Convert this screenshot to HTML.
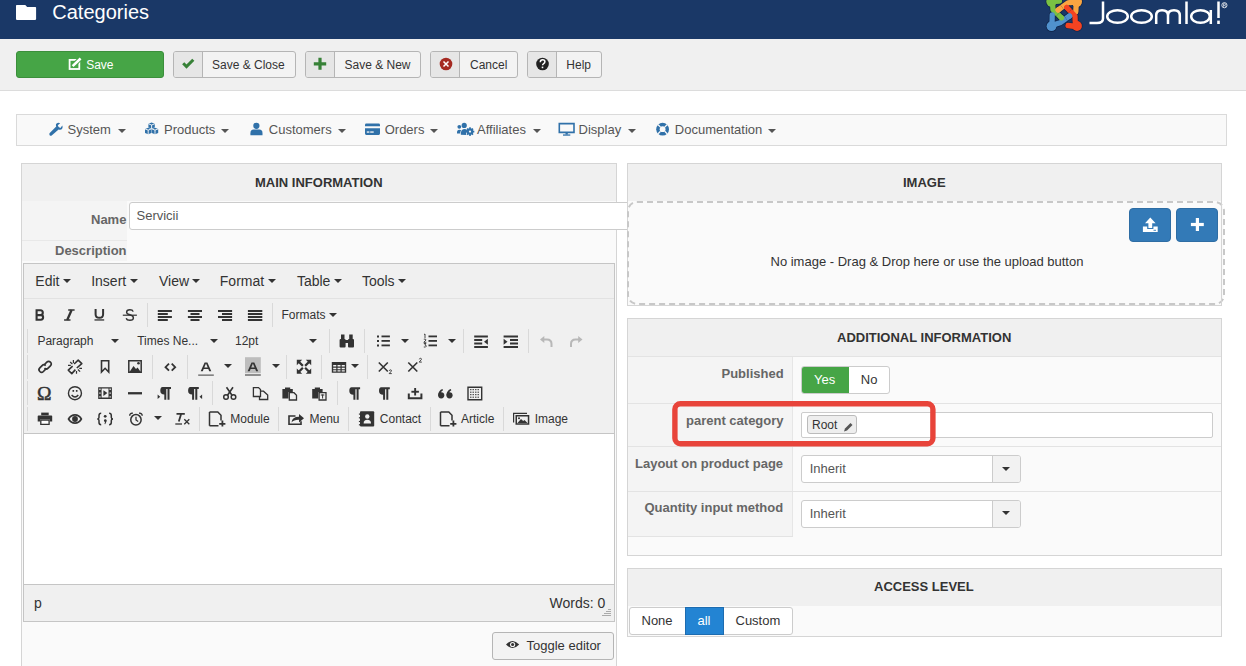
<!DOCTYPE html>
<html><head><meta charset="utf-8">
<style>
*{box-sizing:border-box}
html,body{margin:0;padding:0;width:1246px;height:666px;overflow:hidden;background:#fff;font-family:"Liberation Sans",sans-serif;color:#333}
.a{position:absolute}
.t{position:absolute;white-space:nowrap}
.f12{font-size:12px;line-height:12px}
.f13{font-size:13px;line-height:13px}
.f14{font-size:14px;line-height:14px}
.b{font-weight:bold}
svg{position:absolute;overflow:visible}
#hdr{left:0;top:0;width:1246px;height:39px;background:#1a3867}
#sub{left:0;top:39px;width:1246px;height:52px;background:#f0f0f0;border-bottom:1px solid #dcdcdc}
.btn{position:absolute;top:51px;height:27px;background:#f3f3f3;border:1px solid #b5b5b5;border-radius:3px;color:#333}
.btn .ic{position:absolute;left:0;top:0;bottom:0;width:29px;background:#e6e6e6;border-right:1px solid #b5b5b5;border-radius:2px 0 0 2px}
#menu{left:16px;top:114px;width:1211px;height:32px;background:#f9f9f9;border:1px solid #dadada}
.mt{color:#555}
.caret2{position:absolute;width:0;height:0;border-left:4px solid transparent;border-right:4px solid transparent;border-top:4px solid #333}
.caret{position:absolute;width:0;height:0;border-left:4px solid transparent;border-right:4px solid transparent;border-top:4px solid #555}
.panel{position:absolute;border:1px solid #d5d5d5;background:#fafafa}
.ph{position:absolute;left:0;top:0;right:0;height:38px;background:#f0f0f0}
</style></head><body>
<!-- HEADER -->
<div id="hdr" class="a"></div>
<svg style="left:0;top:0" width="1246" height="39">
  <path d="M16.8,5 h8.5 l1.8,1.9 h8.2 a0.8,0.8 0 0 1 0.8,0.8 v11.4 a0.8,0.8 0 0 1 -0.8,0.8 h-18.5 a0.8,0.8 0 0 1 -0.8,-0.8 v-13.3 a0.8,0.8 0 0 1 0.8,-0.8z" fill="#fff"/>
</svg>
<div class="t" style="left:52.3px;top:2.2px;font-size:20px;line-height:20px;color:#fff">Categories</div>
<!-- joomla logo -->
<svg style="left:0;top:0" width="1246" height="39">
  
  <g stroke-linecap="round" stroke-linejoin="round" fill="none">
   <g stroke="#0f2347" stroke-width="6.6"><path d="M1061.5,17.8 L1053,9.5 L1052.5,3 M1052,1.5 L1059.5,1.2"/><path d="M1058.2,10 L1068,2.8 L1075,2 M1076.3,2 L1075.8,11.8"/><path d="M1066.8,7.5 L1075,16 L1075.2,22 M1076,26.5 L1068,25.5"/><path d="M1069.5,16 L1060,22.8 L1053,25 M1052,26 L1052.2,15"/></g>
   <circle cx="1051.5" cy="1.5" r="5.9" fill="#0f2347"/><circle cx="1076.8" cy="1.8" r="5.9" fill="#0f2347"/><circle cx="1077" cy="26" r="5.6" fill="#0f2347"/><circle cx="1051.5" cy="26.2" r="5.6" fill="#0f2347"/>
   <g stroke-width="5.3"><path d="M1061.5,17.8 L1053,9.5 L1052.5,3 M1052,1.5 L1059.5,1.2" stroke="#7ac143"/><path d="M1058.2,10 L1068,2.8 L1075,2 M1076.3,2 L1075.8,11.8" stroke="#f9a541"/><path d="M1066.8,7.5 L1075,16 L1075.2,22 M1076,26.5 L1068,25.5" stroke="#f44321"/><path d="M1069.5,16 L1060,22.8 L1053,25 M1052,26 L1052.2,15" stroke="#5091cd"/></g>
   <circle cx="1051.5" cy="1.5" r="5.2" fill="#7ac143"/><circle cx="1076.8" cy="1.8" r="5.2" fill="#f9a541"/><circle cx="1077" cy="26" r="4.9" fill="#f44321"/><circle cx="1051.5" cy="26.2" r="4.9" fill="#5091cd"/>
   <g stroke="#0f2347" stroke-width="6.6" stroke-linecap="butt"><path d="M1061.5,17.8 L1058,14.4"/><path d="M1058.2,10 L1062,7.2"/><path d="M1066.8,7.5 L1070,10.8"/><path d="M1069.5,16 L1066,18.5"/></g>
   <g stroke-width="5.3" stroke-linecap="butt"><path d="M1061.5,17.8 L1058,14.4" stroke="#7ac143"/><path d="M1058.2,10 L1062,7.2" stroke="#f9a541"/><path d="M1066.8,7.5 L1070,10.8" stroke="#f44321"/><path d="M1069.5,16 L1066,18.5" stroke="#5091cd"/></g>
   <g stroke-width="5.3"><path d="M1061.5,17.8 L1061.4,17.7" stroke="#7ac143"/><path d="M1058.2,10 L1058.3,9.9" stroke="#f9a541"/><path d="M1066.8,7.5 L1066.9,7.6" stroke="#f44321"/><path d="M1069.5,16 L1069.4,16.1" stroke="#5091cd"/></g>
  </g>
  <g fill="none" stroke="#fff" stroke-width="2.5">
   <path d="M1103,1.5 V18.5 Q1103,23 1097,23 H1089.5"/>
   <ellipse cx="1117.5" cy="16.5" rx="10.3" ry="6.3"/>
   <ellipse cx="1141.5" cy="16.5" rx="10.3" ry="6.3"/>
   <path d="M1156.2,24 V15.5 Q1156.2,10.3 1162,10.3 Q1168,10.3 1168,15.5 V24 M1168,15.5 Q1168,10.3 1174,10.3 Q1179.8,10.3 1179.8,15.5 V24"/>
   <path d="M1186.5,1.5 V24"/>
   <ellipse cx="1200.5" cy="16.5" rx="9.3" ry="6.3"/>
   <path d="M1210.8,10 V24"/>
   <path d="M1218.5,1.5 V18"/>
  </g>
  <rect x="1217.2" y="20.6" width="2.6" height="3.4" fill="#fff"/>
  <circle cx="1224.4" cy="5.2" r="2.6" fill="none" stroke="#fff" stroke-width="0.8"/><path d="M1223.5,6.8 V3.7 H1224.8 Q1225.6,3.7 1225.6,4.5 Q1225.6,5.3 1224.8,5.3 H1223.5 M1224.7,5.3 L1225.6,6.8" fill="none" stroke="#fff" stroke-width="0.6"/>
</svg>
<!-- SUBHEAD TOOLBAR -->
<div id="sub" class="a"></div>
<div class="btn" style="left:16px;width:148px;background:#46a546;border-color:#3b8f3b"></div>
<svg style="left:0;top:0" width="700" height="90">
  <rect x="69.6" y="59.9" width="9.7" height="9.1" fill="none" stroke="#fff" stroke-width="1.8"/>
  <path d="M72.3,66.3 L80.6,58.3" stroke="#46a546" stroke-width="4.6"/>
  <path d="M72.6,66.2 L80.6,58.5" stroke="#fff" stroke-width="2.5"/>
</svg>
<div class="t f12" style="left:86.2px;top:59px;color:#fff">Save</div>

<div class="btn" style="left:173px;width:123px"><div class="ic"></div></div>
<svg style="left:0;top:0" width="700" height="90"><path d="M183.2,63.3 l3.3,3.3 l6.8,-6.8" stroke="#378137" stroke-width="3" fill="none"/></svg>
<div class="t f12" style="left:212px;top:58.5px">Save &amp; Close</div>

<div class="btn" style="left:305px;width:116px"><div class="ic"></div></div>
<svg style="left:0;top:0" width="700" height="90"><path d="M320,57.8 v12 M313.8,63.8 h12.4" stroke="#378137" stroke-width="3.2" fill="none"/></svg>
<div class="t f12" style="left:344.5px;top:58.5px">Save &amp; New</div>

<div class="btn" style="left:430px;width:88px"><div class="ic"></div></div>
<svg style="left:0;top:0" width="700" height="90"><circle cx="446" cy="64" r="6.3" fill="#a52a22"/><path d="M443.5,61.5 l5,5 M448.5,61.5 l-5,5" stroke="#fff" stroke-width="1.5"/></svg>
<div class="t f12" style="left:470px;top:58.5px">Cancel</div>

<div class="btn" style="left:527px;width:75px"><div class="ic"></div></div>
<svg style="left:0;top:0" width="700" height="90"><circle cx="542.5" cy="64" r="6.3" fill="#222"/><path d="M540.3,62.3 q0,-2.5 2.3,-2.5 q2.3,0 2.3,2 q0,1.3 -1.5,2 q-0.8,0.5 -0.8,1.5" stroke="#fff" stroke-width="1.5" fill="none"/><rect x="541.7" y="66.6" width="1.6" height="1.6" fill="#fff"/></svg>
<div class="t f12" style="left:566.3px;top:58.5px">Help</div>

<!-- MENU BAR -->
<div id="menu" class="a"></div>
<svg style="left:0;top:0" width="800" height="150" fill="#3071a9">
  <!-- wrench -->
  <path d="M49.5,133.3 L56.2,126.6 Q55.2,123.5 57.5,122.9 Q59.2,122.6 60.2,123.3 L57.8,125.3 L58.6,127.1 L60.4,127.9 L62.3,125.5 Q62.9,127 62.4,128.2 Q61.3,130.4 58.6,129.6 L51.7,135.4 Q50.7,136.2 49.8,135.4 Q49,134.3 49.5,133.3Z"/>
  <!-- cubes -->
  <path d="M148.4,123.8 L151.6,122.6 L154.8,123.8 V127.4 L151.6,128.6 L148.4,127.4Z M145,128.9 L148.2,127.7 L151.4,128.9 V133 L148.2,134.3 L145,133Z M151.8,128.9 L155,127.7 L158.2,128.9 V133 L155,134.3 L151.8,133Z"/>
  <path d="M148.4,123.8 L151.6,125 L154.8,123.8 M145,128.9 L148.2,130.1 L151.4,128.9 M151.8,128.9 L155,130.1 L158.2,128.9 M151.6,125 V128.6 M148.2,130.1 V134.3 M155,130.1 V134.3" stroke="#f9f9f9" stroke-width="0.9" fill="none"/>
  <!-- user -->
  <circle cx="256.4" cy="125.8" r="3.1"/>
  <path d="M250.4,135.3 V133.2 Q250.4,129.6 253.6,129.6 H259.3 Q262.5,129.6 262.5,133.2 V135.3Z"/>
  <!-- credit card -->
  <path d="M365,124.9 Q365,123.6 366.3,123.6 H378.7 Q380,123.6 380,124.9 V126.2 H365Z M365,128.3 H380 V133.6 Q380,134.9 378.7,134.9 H366.3 Q365,134.9 365,133.6Z"/>
  <rect x="366.8" y="131.4" width="2.6" height="1.3" fill="#f9f9f9"/><rect x="370.2" y="131.4" width="3.5" height="1.3" fill="#f9f9f9"/>
  <!-- users cog -->
  <circle cx="459.3" cy="126.8" r="1.9"/><circle cx="464.2" cy="125.4" r="2.6"/>
  <path d="M457,132.6 Q457,129.8 459.3,129.8 Q460.6,129.8 461.2,130.6 Q460,131.8 460.2,133.6 H457Z M460.8,134.8 Q460.6,129.2 464.2,129 Q466.4,129 467.2,130.4 Q465.4,133 466.2,135Z"/>
  <circle cx="470" cy="131.6" r="3.3"/>
  <path d="M470,127.3 V135.9 M465.7,131.6 H474.3 M467,128.6 L473,134.6 M473,128.6 L467,134.6" stroke="#3071a9" stroke-width="1.6"/>
  <circle cx="470" cy="131.6" r="1.1" fill="#f9f9f9"/>
  <!-- desktop -->
  <path d="M559.3,123.6 H574 V132.4 H559.3Z" fill="none" stroke="#3071a9" stroke-width="1.6"/>
  <rect x="565.5" y="133" width="2.3" height="1.6"/><rect x="563" y="134.4" width="7.3" height="1.3"/>
  <!-- life ring -->
  <circle cx="662.6" cy="129.2" r="6.4"/>
  <circle cx="662.6" cy="129.2" r="2.9" fill="#f9f9f9"/>
  <path d="M658.1,124.7 L660.5,127.1 M667.1,124.7 L664.7,127.1 M658.1,133.7 L660.5,131.3 M667.1,133.7 L664.7,131.3" stroke="#f9f9f9" stroke-width="1.3"/>
</svg>
<div class="t f13 mt" style="left:67.5px;top:123px">System</div><div class="caret" style="left:117.8px;top:129px"></div>
<div class="t f13 mt" style="left:164px;top:123px">Products</div><div class="caret" style="left:221.4px;top:129px"></div>
<div class="t f13 mt" style="left:268.8px;top:123px">Customers</div><div class="caret" style="left:338px;top:129px"></div>
<div class="t f13 mt" style="left:384.7px;top:123px">Orders</div><div class="caret" style="left:430.2px;top:129px"></div>
<div class="t f13 mt" style="left:477px;top:123px">Affiliates</div><div class="caret" style="left:532.8px;top:129px"></div>
<div class="t f13 mt" style="left:578.6px;top:123px">Display</div><div class="caret" style="left:627.5px;top:129px"></div>
<div class="t f13 mt" style="left:674.8px;top:123px">Documentation</div><div class="caret" style="left:768.4px;top:129px"></div>

<!-- MAIN PANEL -->
<div class="panel" style="left:21px;top:163px;width:596px;height:520px"></div>
<div class="a" style="left:22px;top:164px;width:594px;height:37px;background:#f0f0f0"></div>
<div class="t f13 b" style="left:255px;top:176px;color:#333">MAIN INFORMATION</div>
<div class="a" style="left:22px;top:201px;width:105px;height:60px;background:#f4f4f4"></div>
<div class="a" style="left:22px;top:240px;width:105px;height:1px;background:#e8e8e8"></div>
<div class="t f13 b" style="left:91px;top:213px;color:#666">Name</div>
<div class="t f13 b" style="left:55px;top:243.7px;color:#666">Description</div>
<div class="a" style="left:129px;top:202px;width:520px;height:28px;background:#fff;border:1px solid #ccc;border-radius:3px"></div>
<div class="t f13" style="left:136.5px;top:209px;color:#555">Servicii</div>
<!-- editor -->
<div class="a" style="left:23px;top:263px;width:592px;height:359px;border:1px solid #c5c5c5;background:#fff"></div>
<div class="a" style="left:24px;top:264px;width:590px;height:35px;background:#f0f0f0;border-bottom:1px solid #e2e2e2"></div>
<div class="a" style="left:24px;top:299px;width:590px;height:135px;background:#f0f0f0;border-bottom:1px solid #c5c5c5"></div>
<div class="a" style="left:24px;top:584px;width:590px;height:37px;background:#f0f0f0;border-top:1px solid #c5c5c5"></div>
<!-- editor menubar texts -->
<div class="t f14" style="left:35.3px;top:274px">Edit</div><div class="caret2" style="left:63px;top:279.3px"></div>
<div class="t f14" style="left:91.2px;top:274px">Insert</div><div class="caret2" style="left:130px;top:279.3px"></div>
<div class="t f14" style="left:159px;top:274px">View</div><div class="caret2" style="left:191.8px;top:279.3px"></div>
<div class="t f14" style="left:219.8px;top:274px">Format</div><div class="caret2" style="left:268.2px;top:279.3px"></div>
<div class="t f14" style="left:296.9px;top:274px">Table</div><div class="caret2" style="left:334px;top:279.3px"></div>
<div class="t f14" style="left:361.9px;top:274px">Tools</div><div class="caret2" style="left:398.3px;top:279.3px"></div>
<!-- separators -->
<svg style="left:0;top:0" width="620" height="440">
 <g fill="#d9d9d9">
  <rect x="147" y="303" width="1" height="24"/><rect x="272" y="303" width="1" height="24"/>
  <rect x="27" y="329" width="1" height="24"/><rect x="329" y="329" width="1" height="24"/><rect x="364" y="329" width="1" height="24"/><rect x="463" y="329" width="1" height="24"/><rect x="528" y="329" width="1" height="24"/>
  <rect x="27" y="355" width="1" height="24"/><rect x="152" y="355" width="1" height="24"/><rect x="187" y="355" width="1" height="24"/><rect x="286" y="355" width="1" height="24"/><rect x="321" y="355" width="1" height="24"/><rect x="367" y="355" width="1" height="24"/>
  <rect x="27" y="381" width="1" height="24"/><rect x="212" y="381" width="1" height="24"/><rect x="337" y="381" width="1" height="24"/>
  <rect x="27" y="407" width="1" height="24"/><rect x="199" y="407" width="1" height="24"/><rect x="278" y="407" width="1" height="24"/><rect x="348" y="407" width="1" height="24"/><rect x="430" y="407" width="1" height="24"/><rect x="503" y="407" width="1" height="24"/>
 </g>
</svg>
<!-- row texts -->
<div class="t f12" style="left:281.5px;top:308.8px">Formats</div><div class="caret2" style="left:329.2px;top:313px"></div>
<div class="t f12" style="left:37.4px;top:335px">Paragraph</div><div class="caret2" style="left:111px;top:339px"></div>
<div class="t f12" style="left:137.2px;top:335px">Times Ne...</div><div class="caret2" style="left:209.7px;top:339px"></div>
<div class="t f12" style="left:235px;top:335px">12pt</div><div class="caret2" style="left:308.8px;top:339px"></div>
<div class="caret2" style="left:400.8px;top:339px"></div><div class="caret2" style="left:447.7px;top:339px"></div>
<div class="caret2" style="left:224.2px;top:363.5px"></div><div class="caret2" style="left:271.6px;top:363.5px"></div><div class="caret2" style="left:351px;top:363.5px"></div>
<div class="caret2" style="left:154.2px;top:416px"></div>
<div class="t f12" style="left:230.3px;top:412.9px">Module</div>
<div class="t f12" style="left:309.5px;top:412.9px">Menu</div>
<div class="t f12" style="left:379.8px;top:412.9px">Contact</div>
<div class="t f12" style="left:461px;top:412.9px">Article</div>
<div class="t f12" style="left:534.7px;top:412.9px">Image</div>
<!-- editor icons -->
<svg style="left:0;top:0" width="620" height="440">
<g fill="none" stroke="#333">
 <!-- B -->
 <path d="M36.6,309.2 V320.8 M36.6,310.25 H40.4 Q42.8,310.25 42.8,312.7 Q42.8,315.1 40.4,315.1 H36.6 M40.4,315.1 H40.9 Q43.1,315.1 43.1,317.35 Q43.1,319.75 40.9,319.75 H36.6" stroke-width="2.1"/>
 <!-- I -->
 <path d="M68.2,310 H74.6 M64.1,320 H70.5" stroke-width="1.6"/>
 <path d="M71.6,310 L67.2,320" stroke-width="2.3"/>
 <!-- U -->
 <path d="M95.6,309 V314.2 Q95.6,317.8 99.35,317.8 Q103.1,317.8 103.1,314.2 V309" stroke-width="2"/>
 <!-- strike -->
 <path d="M122.8,315.2 H136.9" stroke-width="1.2"/>
 <path d="M133.2,311.6 Q132.6,309.8 129.9,309.8 Q126.6,309.8 126.6,312.2 Q126.6,313.9 129.9,314.8 Q133.4,315.8 133.4,318 Q133.4,320.3 129.9,320.3 Q126.8,320.3 126.2,318.3" stroke-width="1.4"/>
</g>
<g fill="#333">
 <rect x="94.5" y="319.3" width="9.7" height="1.3"/>
 <!-- align -->
 <rect x="157.8" y="310" width="14.1" height="2"/><rect x="157.8" y="313" width="10" height="2"/><rect x="157.8" y="316" width="14.1" height="2"/><rect x="157.8" y="319" width="10" height="2"/>
 <rect x="187.9" y="310" width="14.1" height="2"/><rect x="190.5" y="313" width="9" height="2"/><rect x="187.9" y="316" width="14.1" height="2"/><rect x="190.5" y="319" width="9" height="2"/>
 <rect x="218" y="310" width="14.1" height="2"/><rect x="222" y="313" width="10.1" height="2"/><rect x="218" y="316" width="14.1" height="2"/><rect x="222" y="319" width="10.1" height="2"/>
 <rect x="247.9" y="310" width="14.4" height="2"/><rect x="247.9" y="313" width="14.4" height="2"/><rect x="247.9" y="316" width="14.4" height="2"/><rect x="247.9" y="319" width="14.4" height="2"/>
 <!-- binoculars -->
 <rect x="339.6" y="339" width="6" height="8.5" rx="1"/><rect x="348" y="339" width="6" height="8.5" rx="1"/>
 <rect x="341" y="334.5" width="3.5" height="5"/><rect x="349.2" y="334.5" width="3.5" height="5"/><rect x="345" y="340" width="3.5" height="3"/>
 <!-- bullist -->
 <rect x="377" y="335.5" width="2" height="2"/><rect x="377" y="340" width="2" height="2"/><rect x="377" y="344.5" width="2" height="2"/>
 <rect x="381.5" y="335.5" width="8.4" height="1.8"/><rect x="381.5" y="340" width="8.4" height="1.8"/><rect x="381.5" y="344.5" width="8.4" height="1.8"/>
 <!-- numlist -->
 <rect x="428.5" y="335.5" width="8.5" height="1.8"/><rect x="428.5" y="340" width="8.5" height="1.8"/><rect x="428.5" y="344.5" width="8.5" height="1.8"/>
</g>
<g fill="none" stroke="#333" stroke-width="0.9">
 <path d="M424,334.5 L425,334 V338 M423.8,339.2 Q426,338.5 426,340 L423.8,342.3 H426.3 M423.8,343.5 H426 L424.8,345 Q426.4,345 426.3,346.2 Q426,347.5 423.8,347"/>
</g>
<g fill="#333">
 <!-- outdent / indent -->
 <rect x="474.2" y="335.5" width="13.7" height="2"/><rect x="474.2" y="339" width="8" height="2"/><rect x="474.2" y="342.5" width="8" height="2"/><rect x="474.2" y="346" width="13.7" height="2"/>
 <path d="M487.9,338.8 V344.7 L484,341.75Z"/>
 <rect x="503.6" y="335.5" width="14.4" height="2"/><rect x="510" y="339" width="8" height="2"/><rect x="510" y="342.5" width="8" height="2"/><rect x="503.6" y="346" width="14.4" height="2"/>
 <path d="M503.6,338.8 V344.7 L507.5,341.75Z"/>
</g>
<g fill="none" stroke="#b8b8b8" stroke-width="2">
 <path d="M543,339.5 H547 Q551.5,339.5 551.5,344 V347"/><path d="M579.5,339.5 H575.5 Q571,339.5 571,344 V347"/>
</g>
<g fill="#b8b8b8"><path d="M540,339.5 L544.3,336 V343Z"/><path d="M582.5,339.5 L578.2,336 V343Z"/></g>
<!-- row3 -->
<g fill="none" stroke="#333" stroke-width="1.7">
 <path d="M44.5,364.5 L46.8,362.2 Q48.6,360.4 50.4,362.2 Q52.2,364 50.4,365.8 L48.1,368.1 Q46.3,369.9 44.5,368.1"/>
 <path d="M45.7,369.2 L43.4,371.5 Q41.6,373.3 39.8,371.5 Q38,369.7 39.8,367.9 L42.1,365.6 Q43.9,363.8 45.7,365.6"/>
 <path d="M74.1,364 L78.2,360.1 L81.8,363.6 L76.8,368" stroke-width="1.6" stroke-linejoin="round"/>
 <path d="M72.6,366.2 L68.3,370.2 L71.8,373.6 L75.4,369.6" stroke-width="1.6" stroke-linejoin="round"/>
 <path d="M73.4,360 V363 M70.2,362 L72.4,364.2 M68,365.3 H70.8 M79.3,368.4 H82 M77.9,369.5 L80.1,371.7 M76.5,371 V373.8" stroke-width="1.2"/>
 <path d="M101.5,360.8 H108.7 V372 L105.1,368.3 L101.5,372Z" stroke-width="1.6"/>
 <path d="M128.8,360.8 H141.2 V372.2 H128.8Z" stroke-width="1.5"/>
 <path d="M169,364 L165.5,367.5 L169,371 M171.7,364 L175.2,367.5 L171.7,371" stroke-width="1.8" transform="translate(0,-0.3)"/>
</g>
<g fill="#333">
 <path d="M129.5,372 L133.5,366 L136,369 L137.6,367.5 L140.7,372Z"/><circle cx="138.5" cy="363.3" r="1.3"/>
 <!-- forecolor -->
 <path d="M204.6,362.4 H207.4 L211.3,371.3 H209.2 L208.3,369.1 H203.7 L202.8,371.3 H200.7Z M204.3,367.5 H207.7 L206,363.4Z" fill-rule="evenodd"/>
 <rect x="198.2" y="374.4" width="15.6" height="1.5" fill="#777"/>
 <!-- backcolor -->
 <rect x="245" y="357.2" width="15.8" height="16" fill="#bdbdbd"/>
 <path d="M251.5,362.4 H254.3 L258.2,371.3 H256.1 L255.2,369.1 H250.6 L249.7,371.3 H247.6Z M251.2,367.5 H254.6 L252.9,363.4Z" fill-rule="evenodd"/>
 <rect x="245" y="374.2" width="15.8" height="1.6" fill="#777"/>
 <!-- fullscreen -->
 <path d="M296.8,359.8 H302.2 L296.8,365.2Z M311.2,359.8 H305.8 L311.2,365.2Z M296.8,373.8 H302.2 L296.8,368.4Z M311.2,373.8 H305.8 L311.2,368.4Z"/>
 <path d="M298.5,361.5 L302.9,365.9 M309.5,361.5 L305.1,365.9 M298.5,372.1 L302.9,367.7 M309.5,372.1 L305.1,367.7" stroke="#333" stroke-width="2.2"/>
 <!-- table -->
 <path d="M331.8,362 H346.2 V372.7 H331.8Z M333.2,365 V366.6 H336.3 V365Z M337.5,365 V366.6 H340.5 V365Z M341.7,365 V366.6 H344.8 V365Z M333.2,367.7 V369.3 H336.3 V367.7Z M337.5,367.7 V369.3 H340.5 V367.7Z M341.7,367.7 V369.3 H344.8 V367.7Z M333.2,370.2 V371.5 H336.3 V370.2Z M337.5,370.2 V371.5 H340.5 V370.2Z M341.7,370.2 V371.5 H344.8 V370.2Z" fill-rule="evenodd"/>
</g>
<g fill="none" stroke="#333">
 <path d="M378.8,362.5 L387.8,371.5 M387.8,362.5 L378.8,371.5" stroke-width="1.6"/>
 <path d="M408.3,362.5 L417.3,371.5 M417.3,362.5 L408.3,371.5" stroke-width="1.6"/>
 <path d="M389.3,370.8 Q389.5,369.8 390.5,369.8 Q391.6,369.8 391.4,371 L389.2,373.6 H391.8" stroke-width="0.9"/>
 <path d="M419.3,359.3 Q419.5,358.3 420.5,358.3 Q421.6,358.3 421.4,359.5 L419.2,362.1 H421.8" stroke-width="0.9"/>
</g>
<!-- row4 -->
<text x="37.1" y="399.7" font-family="Liberation Serif" font-size="19.5" fill="#333" stroke="#333" stroke-width="0.5">Ω</text>
<g fill="none" stroke="#333">
 <circle cx="74.95" cy="393.2" r="6.5" stroke-width="1.4"/>
 <path d="M71.6,395 Q75,399 78.3,395" stroke-width="1.4"/>
 
 
 <circle cx="161" cy="397" r="0" />
</g>
<g fill="#333">
 <rect x="72.5" y="390" width="1.6" height="1.8"/><rect x="75.9" y="390" width="1.6" height="1.8"/>
 <path d="M98.2,387.3 H111.9 V398.9 H98.2Z M101.6,388.6 V397.6 H108.5 V388.6Z M99.3,388.6 V390 H100.6 V388.6Z M99.3,392.4 V393.8 H100.6 V392.4Z M99.3,396.2 V397.6 H100.6 V396.2Z M109.5,388.6 V390 H110.8 V388.6Z M109.5,392.4 V393.8 H110.8 V392.4Z M109.5,396.2 V397.6 H110.8 V396.2Z" fill-rule="evenodd"/>
 <path d="M103.4,390.2 L107.4,393.1 L103.4,396Z"/>
 <rect x="128" y="392.1" width="14" height="2.3"/>
 <!-- ltr pilcrow -->
 <path d="M162.5,387 H171 V389 H169.5 V399.8 H167.5 V389 H166.3 V399.8 H164.3 V394.6 Q160.3,394.6 160.3,390.8 Q160.3,387 162.5,387Z"/>
 <path d="M157.6,394.5 L160.2,396.8 L157.6,399.1Z"/>
 <path d="M190.3,387 H198.8 V389 H197.3 V399.8 H195.3 V389 H194.1 V399.8 H192.1 V394.6 Q188.1,394.6 188.1,390.8 Q188.1,387 190.3,387Z"/>
 <path d="M202.1,394.5 L199.5,396.8 L202.1,399.1Z"/>
 <!-- pilcrows -->
 <path d="M351.5,387.3 H360.1 V389.3 H358.6 V399.8 H356.6 V389.3 H355.4 V399.8 H353.4 V394.7 Q349.3,394.7 349.3,391 Q349.3,387.3 351.5,387.3Z"/>
 <path d="M381.2,387.3 H389.8 V389.3 H388.3 V399.8 H386.3 V389.3 H385.1 V399.8 H383.1 V394.7 Q379,394.7 379,391 Q379,387.3 381.2,387.3Z"/>
 <!-- upload -->
 <path d="M407.8,393.5 H409.8 V397.3 H420.4 V393.5 H422.4 V399.3 H407.8Z"/>
 <rect x="414.2" y="388" width="1.9" height="7.5"/><rect x="411.4" y="390.8" width="7.5" height="1.9"/>
 <!-- quote -->
 <circle cx="441.2" cy="395.3" r="3.1"/><circle cx="449.5" cy="395.3" r="3.1"/>
 <path d="M438.2,395 Q438.5,390.3 442.5,389 L443,390.3 Q440.6,391.5 440.8,394Z"/>
 <path d="M446.5,395 Q446.8,390.3 450.8,389 L451.3,390.3 Q448.9,391.5 449.1,394Z"/>
</g>
<g fill="none" stroke="#333">
 <!-- scissors -->
 <circle cx="226" cy="397" r="2.3" stroke-width="1.5"/><circle cx="233.5" cy="397" r="2.3" stroke-width="1.5"/>
 <path d="M227.5,395.2 L233,387.2 M232,395.2 L226.5,387.2" stroke-width="1.6"/>
 <!-- copy -->
 <path d="M253.4,387.6 H258.5 L260.5,389.6 V396.5 H253.4Z" stroke-width="1.3"/>
 <path d="M260.5,391.2 H263.5 L267.7,395 V399.5 H259.5 V396.5" stroke-width="1.3"/>
 <!-- template -->
 <path d="M468,387.2 H481.7 V399.8 H468Z" stroke-width="1.4"/>
 <path d="M470,389.7 H479.8 M470,392.2 H479.8 M470,394.7 H479.8 M470,397.2 H479.8" stroke-width="1" stroke-dasharray="1.5 1"/>
</g>
<g fill="#333">
 <!-- paste -->
 <path d="M282.4,389 H285 V387.5 H290.2 V389 H292.8 V392 H288.5 V398.5 H282.4Z"/>
 <path d="M289.3,392.7 H294 L296.5,395.2 V400 H289.3Z" fill="none" stroke="#333" stroke-width="1.3"/>
 <path d="M312.2,389 H314.8 V387.5 H320 V389 H322.6 V392 H318.3 V398.5 H312.2Z"/>
 <path d="M319.1,392.7 H326 V400 H319.1Z" fill="none" stroke="#333" stroke-width="1.3"/>
 <rect x="320.8" y="394.5" width="3.5" height="1"/><rect x="322.1" y="394.5" width="1" height="4"/>
</g>
<!-- row5 -->
<g fill="#333">
 <!-- print -->
 <path d="M41.2,412.6 H48.7 V415.3 H41.2Z"/>
 <path d="M37.7,416.3 Q37.7,415.6 38.5,415.6 H51.4 Q52.2,415.6 52.2,416.3 V421.6 H49.8 V419.6 H40.1 V421.6 H37.7Z"/>
 <path d="M40.8,420.2 H49.1 V424.3 H40.8Z" fill="#fff" stroke="#333" stroke-width="1.3"/>
 <!-- eye -->
 <path d="M67.5,419 C71,412.3 79,412.3 82.4,419 C79,425.7 71,425.7 67.5,419Z"/>
 <path d="M69.6,419 C72.5,414.6 77.5,414.6 80.3,419 C77.5,423.4 72.5,423.4 69.6,419Z" fill="#f0f0f0"/>
 <circle cx="75" cy="419" r="2.9"/>
</g>
<path d="M101.2,413.3 Q99,413.3 99,415.5 V417.6 Q99,419 97.3,419 Q99,419 99,420.4 V422.6 Q99,424.8 101.2,424.8 M109.1,413.3 Q111.3,413.3 111.3,415.5 V417.6 Q111.3,419 113,419 Q111.3,419 111.3,420.4 V422.6 Q111.3,424.8 109.1,424.8" fill="none" stroke="#333" stroke-width="1.5"/>
<circle cx="105.2" cy="416.3" r="1.4" fill="#333"/><path d="M103.9,420.8 A1.4,1.4 0 1 1 106.5,421.4 L105.2,424.2 L104.5,424 L105,421.9 A1.4,1.4 0 0 1 103.9,420.8Z" fill="#333"/>
<g fill="none" stroke="#333">
 <circle cx="135.95" cy="419.8" r="5.2" stroke-width="1.5"/>
 <path d="M136,416.8 V420 L138.2,421.5" stroke-width="1.3"/>
 <path d="M129.7,415.8 Q129.8,412.8 132.8,413.3 M142.2,415.8 Q142.1,412.8 139.1,413.3" stroke-width="1.4"/>
 <!-- Tx -->
 <path d="M176.5,413.8 H184.8 M181.2,413.8 L178.8,421.5" stroke-width="1.8"/>
 <path d="M175.3,424 H182" stroke-width="1.3"/>
 <path d="M184.3,419.3 L189.3,424.3 M189.3,419.3 L184.3,424.3" stroke-width="1.3"/>
 <!-- module / article doc -->
 <path d="M209.5,412 H217.8 L221,415.2 V420.5 M218.5,425.8 H209.5Z" stroke-width="1.5"/>
 <path d="M209.5,412 V425.8" stroke-width="1.5"/>
 <path d="M440.5,412 H448.8 L452,415.2 V420.5 M449.5,425.8 H440.5Z" stroke-width="1.5"/>
 <path d="M440.5,412 V425.8" stroke-width="1.5"/>
 <!-- menu share -->
 <path d="M295.5,416 H289 V424.2 H301 V421.2" stroke-width="1.6"/>
</g>
<g fill="#333">
 <path d="M221.5,420.5 H223.3 V423 H225.4 V424.8 H223.3 V426.5 H221.5 V424.8 H219.2 V423 H221.5Z"/>
 <path d="M452.5,420.5 H454.3 V423 H456.4 V424.8 H454.3 V426.5 H452.5 V424.8 H450.2 V423 H452.5Z"/>
 <path d="M291.5,422.5 Q292,416.8 299,416.8 V414 L304,418.2 L299,422.5 V419.8 Q294,419.6 291.5,422.5Z"/>
 <!-- contact -->
 <rect x="360" y="411.2" width="14.2" height="15.3" rx="1"/>
 <circle cx="367.3" cy="416.5" r="2.2" fill="#f0f0f0"/>
 <path d="M363.6,423.5 Q363.6,419.8 367.3,419.8 Q371,419.8 371,423.5Z" fill="#f0f0f0"/>
 <rect x="358.9" y="413.5" width="2" height="1.2"/><rect x="358.9" y="417.2" width="2" height="1.2"/><rect x="358.9" y="420.9" width="2" height="1.2"/><rect x="358.9" y="424.2" width="2" height="1.2"/>
 <!-- image -->
 <path d="M515.5,415 H529.3 V424.8 H515.5Z M517,416.5 V423.3 H527.8 V416.5Z" fill-rule="evenodd"/>
 <path d="M513,412.8 H527 V414 H514.2 V422.5 H513Z"/>
 <path d="M517.5,423 L521,419 L523.2,421 L524.5,420 L527.5,423Z"/><circle cx="519" cy="418.2" r="1"/>
</g>
</svg>
<!-- editor statusbar -->
<div class="t f14" style="left:34px;top:595.5px">p</div>
<div class="t f14" style="left:549.5px;top:596.2px">Words: 0</div>
<svg style="left:0;top:0" width="620" height="666"><g fill="#aaa">
 <rect x="608" y="609" width="3" height="1"/><rect x="606" y="611" width="5" height="1"/><rect x="604" y="613" width="7" height="1"/><rect x="602" y="615" width="9" height="1"/>
</g></svg>
<!-- toggle editor -->
<div class="a" style="left:492px;top:632px;width:122px;height:28px;background:#f3f3f3;border:1px solid #b5b5b5;border-radius:3px"></div>
<svg style="left:0;top:0" width="620" height="666">
 <path d="M506,644.5 Q512.6,637.5 519.2,644.5 Q512.6,651.5 506,644.5Z" fill="#333"/>
 <circle cx="512.6" cy="644.5" r="2.6" fill="#f3f3f3"/><circle cx="512.6" cy="644.5" r="1.5" fill="#333"/>
</svg>
<div class="t f13" style="left:526.5px;top:638.5px">Toggle editor</div>
<!-- IMAGE PANEL -->
<div class="panel" style="left:627px;top:163px;width:595px;height:143px"></div>
<div class="a" style="left:628px;top:164px;width:593px;height:37px;background:#f0f0f0"></div>
<div class="t f13 b" style="left:903px;top:176px">IMAGE</div>
<svg style="left:0;top:0" width="1246" height="310">
 <rect x="628" y="202" width="596" height="102" rx="9" ry="9" fill="#fafafa" stroke="#c8c8c8" stroke-width="2" stroke-dasharray="6 4"/><rect x="1221" y="201" width="1" height="104" fill="#d5d5d5"/>
</svg>
<div class="a" style="left:1129px;top:208px;width:42px;height:34px;background:#337ab7;border:1px solid #2e6da4;border-radius:4px"></div>
<div class="a" style="left:1176px;top:208px;width:42px;height:34px;background:#337ab7;border:1px solid #2e6da4;border-radius:4px"></div>
<svg style="left:0;top:0" width="1246" height="310" fill="#fff">
 <path d="M1150.3,217.6 L1155.6,223.2 H1152.2 V228 H1148.4 V223.2 H1145Z"/>
 <path d="M1142.9,226.4 H1147.2 V229 H1153.4 V226.4 H1157.7 V231.9 H1142.9Z"/>
 <rect x="1153.5" y="229.8" width="2.5" height="0.9" fill="#337ab7"/>
 <rect x="1195.8" y="218" width="3.2" height="13"/><rect x="1190.9" y="222.9" width="12.9" height="3.2"/>
</svg>
<div class="t f13" style="left:770.5px;top:254.5px">No image - Drag &amp; Drop here or use the upload button</div>

<!-- ADDITIONAL INFO -->
<div class="panel" style="left:627px;top:318px;width:595px;height:238px"></div>
<div class="a" style="left:628px;top:319px;width:593px;height:38px;background:#f0f0f0;border-bottom:1px solid #e3e3e3"></div>
<div class="t f13 b" style="left:837px;top:331px">ADDITIONAL INFORMATION</div>
<div class="a" style="left:628px;top:357px;width:165px;height:180px;background:#f4f4f4;border-right:1px solid #e6e6e6"></div>
<div class="a" style="left:628px;top:403px;width:593px;height:1px;background:#e3e3e3"></div>
<div class="a" style="left:628px;top:446px;width:593px;height:1px;background:#e3e3e3"></div>
<div class="a" style="left:628px;top:491px;width:593px;height:1px;background:#e3e3e3"></div>
<div class="a" style="left:628px;top:536px;width:165px;height:1px;background:#e3e3e3"></div>
<div class="t f13 b" style="left:721.5px;top:367px;color:#666">Published</div>
<div class="t f13 b" style="left:686px;top:414.3px;color:#666">parent category</div>
<div class="t f13 b" style="left:635px;top:456.7px;color:#666">Layout on product page</div>
<div class="t f13 b" style="left:644.5px;top:501px;color:#666">Quantity input method</div>
<!-- yes/no -->
<div class="a" style="left:801px;top:366px;width:89px;height:28px;background:#fff;border:1px solid #ccc;border-radius:3px"></div>
<div class="a" style="left:802px;top:367px;width:47px;height:26px;background:#46a546;border-radius:2px 0 0 2px"></div>
<div class="t f13" style="left:814px;top:373.2px;color:#fff">Yes</div>
<div class="t f13" style="left:860.8px;top:373.2px;color:#333">No</div>
<!-- parent input -->
<div class="a" style="left:801px;top:412px;width:412px;height:26px;background:#fff;border:1px solid #ccc;border-radius:2px"></div>
<div class="a" style="left:807px;top:415px;width:50px;height:19px;background:#eee;border:1px solid #bbb;border-radius:3px"></div>
<div class="t f12" style="left:812px;top:418.5px">Root</div>
<svg style="left:0;top:0" width="1246" height="666"><path d="M844,431.5 L845,428.5 L850.5,423 L852.5,425 L847,430.5Z" fill="#555"/></svg>
<!-- red highlight -->
<svg style="left:0;top:0" width="1246" height="666"><rect x="674.9" y="403.7" width="258" height="40" rx="5.5" fill="none" stroke="#e8443a" stroke-width="5.4"/></svg>
<!-- selects -->
<div class="a" style="left:801px;top:455px;width:220px;height:28px;background:#fff;border:1px solid #ccc;border-radius:3px"></div>
<div class="a" style="left:992px;top:456px;width:28px;height:26px;background:#f2f2f2;border-left:1px solid #ccc;border-radius:0 2px 2px 0"></div>
<div class="t f13" style="left:809.7px;top:462px;color:#555">Inherit</div>
<div class="caret2" style="left:1002px;top:466.5px"></div>
<div class="a" style="left:801px;top:500px;width:220px;height:28px;background:#fff;border:1px solid #ccc;border-radius:3px"></div>
<div class="a" style="left:992px;top:501px;width:28px;height:26px;background:#f2f2f2;border-left:1px solid #ccc;border-radius:0 2px 2px 0"></div>
<div class="t f13" style="left:809.7px;top:506.5px;color:#555">Inherit</div>
<div class="caret2" style="left:1002px;top:511px"></div>

<!-- ACCESS LEVEL -->
<div class="panel" style="left:627px;top:568px;width:595px;height:69px"></div>
<div class="a" style="left:628px;top:569px;width:593px;height:37px;background:#f0f0f0"></div>
<div class="t f13 b" style="left:874px;top:579.5px">ACCESS LEVEL</div>
<div class="a" style="left:629px;top:607px;width:164px;height:28px;background:#fff;border:1px solid #ccc;border-radius:3px"></div>
<div class="a" style="left:685px;top:607px;width:39px;height:28px;background:#2384d3;border:1px solid #1d6cb0"></div>
<div class="t f13" style="left:641.5px;top:613.6px">None</div>
<div class="t f13" style="left:697.5px;top:613.6px;color:#fff">all</div>
<div class="t f13" style="left:735.5px;top:613.6px">Custom</div>
</body></html>
